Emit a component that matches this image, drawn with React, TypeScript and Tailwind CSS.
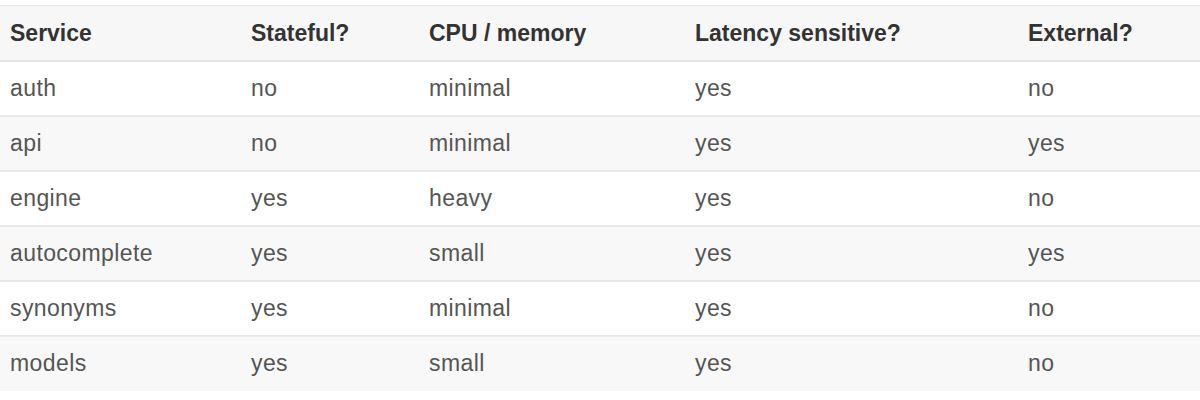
import React from "react";

const headers = ["Service", "Stateful?", "CPU / memory", "Latency sensitive?", "External?"];
const rows = [
  ["auth", "no", "minimal", "yes", "no"],
  ["api", "no", "minimal", "yes", "yes"],
  ["engine", "yes", "heavy", "yes", "no"],
  ["autocomplete", "yes", "small", "yes", "yes"],
  ["synonyms", "yes", "minimal", "yes", "no"],
  ["models", "yes", "small", "yes", "no"],
];
const widths = ["w-[241px]", "w-[178px]", "w-[266px]", "w-[333px]", "w-[182px]"];

export default function App() {
  return (
    <div className="w-[1200px] h-[400px] bg-white pt-[5px]" style={{ fontFamily: '"Liberation Sans", Arial, sans-serif' }}>
      <table className="w-[1200px] border-collapse table-fixed text-[23px]">
        <colgroup>
          {widths.map((w, i) => (
            <col key={i} className={w} />
          ))}
        </colgroup>
        <thead>
          <tr className="bg-[#f7f7f7] h-[55px] border-t border-b-2 border-[#e4e4e4]">
            {headers.map((h) => (
              <th key={h} className="text-left font-bold text-[#333333] pl-[10px] align-middle">
                {h}
              </th>
            ))}
          </tr>
        </thead>
        <tbody>
          {rows.map((r, i) => (
            <tr
              key={i}
              className={`h-[55px] ${i % 2 === 1 ? "bg-[#f8f8f8]" : "bg-white"} ${i < rows.length - 1 ? "border-b-2 border-[#e8e8e8]" : ""}`}
            >
              {r.map((c, j) => (
                <td key={j} className="text-left text-[#555555] pl-[10px] align-middle tracking-[0.4px]">
                  {c}
                </td>
              ))}
            </tr>
          ))}
        </tbody>
      </table>
    </div>
  );
}
